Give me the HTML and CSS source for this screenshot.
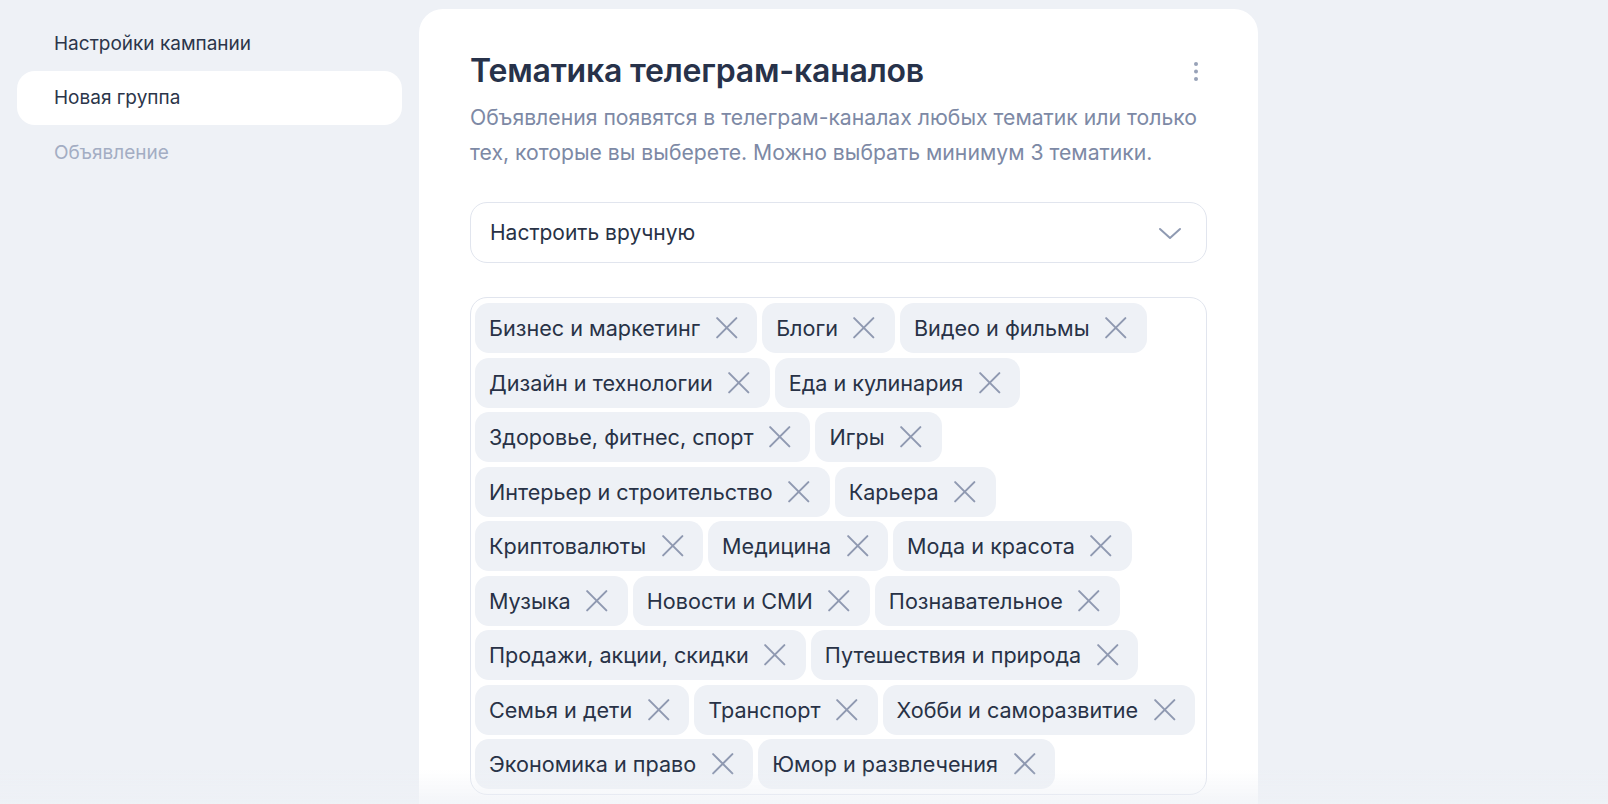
FILE: index.html
```html
<!DOCTYPE html>
<html lang="ru">
<head>
<meta charset="utf-8">
<title>Тематика телеграм-каналов</title>
<link rel="stylesheet" href="styles.css">
</head>
<body>
<div class="page">
  <nav class="sidebar">
    <div class="nav-item">Настройки кампании</div>
    <div class="nav-item active">Новая группа</div>
    <div class="nav-item muted">Объявление</div>
  </nav>
  <main class="card">
    <div class="card-head">
      <h1 class="title">Тематика телеграм-каналов</h1>
      <button class="kebab" aria-label="Ещё">
        <svg width="6" height="21" viewBox="0 0 6 21"><circle cx="3" cy="3" r="2"/><circle cx="3" cy="10.5" r="2"/><circle cx="3" cy="18" r="2"/></svg>
      </button>
    </div>
    <p class="desc">Объявления появятся в телеграм-каналах любых тематик или только тех, которые вы выберете. Можно выбрать минимум 3 тематики.</p>
    <div class="select">
      <span>Настроить вручную</span>
      <svg class="chev" width="26" height="26" viewBox="0 0 26 26"><path d="M3 9l10 9 10-9" fill="none" stroke-width="2" stroke-linecap="round" stroke-linejoin="round"/></svg>
    </div>
    <div class="tags">
      <span class="tag">Бизнес и маркетинг<svg class="x" viewBox="0 0 22 22"><path d="M2 2l18 18M20 2L2 20"/></svg></span>
      <span class="tag">Блоги<svg class="x" viewBox="0 0 22 22"><path d="M2 2l18 18M20 2L2 20"/></svg></span>
      <span class="tag">Видео и фильмы<svg class="x" viewBox="0 0 22 22"><path d="M2 2l18 18M20 2L2 20"/></svg></span>
      <span class="tag">Дизайн и технологии<svg class="x" viewBox="0 0 22 22"><path d="M2 2l18 18M20 2L2 20"/></svg></span>
      <span class="tag">Еда и кулинария<svg class="x" viewBox="0 0 22 22"><path d="M2 2l18 18M20 2L2 20"/></svg></span>
      <span class="tag">Здоровье, фитнес, спорт<svg class="x" viewBox="0 0 22 22"><path d="M2 2l18 18M20 2L2 20"/></svg></span>
      <span class="tag">Игры<svg class="x" viewBox="0 0 22 22"><path d="M2 2l18 18M20 2L2 20"/></svg></span>
      <span class="tag">Интерьер и строительство<svg class="x" viewBox="0 0 22 22"><path d="M2 2l18 18M20 2L2 20"/></svg></span>
      <span class="tag">Карьера<svg class="x" viewBox="0 0 22 22"><path d="M2 2l18 18M20 2L2 20"/></svg></span>
      <span class="tag">Криптовалюты<svg class="x" viewBox="0 0 22 22"><path d="M2 2l18 18M20 2L2 20"/></svg></span>
      <span class="tag">Медицина<svg class="x" viewBox="0 0 22 22"><path d="M2 2l18 18M20 2L2 20"/></svg></span>
      <span class="tag">Мода и красота<svg class="x" viewBox="0 0 22 22"><path d="M2 2l18 18M20 2L2 20"/></svg></span>
      <span class="tag">Музыка<svg class="x" viewBox="0 0 22 22"><path d="M2 2l18 18M20 2L2 20"/></svg></span>
      <span class="tag">Новости и СМИ<svg class="x" viewBox="0 0 22 22"><path d="M2 2l18 18M20 2L2 20"/></svg></span>
      <span class="tag">Познавательное<svg class="x" viewBox="0 0 22 22"><path d="M2 2l18 18M20 2L2 20"/></svg></span>
      <span class="tag">Продажи, акции, скидки<svg class="x" viewBox="0 0 22 22"><path d="M2 2l18 18M20 2L2 20"/></svg></span>
      <span class="tag">Путешествия и природа<svg class="x" viewBox="0 0 22 22"><path d="M2 2l18 18M20 2L2 20"/></svg></span>
      <span class="tag">Семья и дети<svg class="x" viewBox="0 0 22 22"><path d="M2 2l18 18M20 2L2 20"/></svg></span>
      <span class="tag">Транспорт<svg class="x" viewBox="0 0 22 22"><path d="M2 2l18 18M20 2L2 20"/></svg></span>
      <span class="tag">Хобби и саморазвитие<svg class="x" viewBox="0 0 22 22"><path d="M2 2l18 18M20 2L2 20"/></svg></span>
      <span class="tag">Экономика и право<svg class="x" viewBox="0 0 22 22"><path d="M2 2l18 18M20 2L2 20"/></svg></span>
      <span class="tag">Юмор и развлечения<svg class="x" viewBox="0 0 22 22"><path d="M2 2l18 18M20 2L2 20"/></svg></span>
    </div>
  </main>
</div>
<div class="fade"></div>
</body>
</html>
```

FILE: styles.css
```css
html, body {
  margin: 0;
  padding: 0;
  height: 100%;
  overflow: hidden;
}
body {
  background: #eef1f6;
  font-family: Inter, "Noto Sans", "Liberation Sans", sans-serif;
  color: #283246;
}
.page {
  display: flex;
  align-items: flex-start;
  padding: 9px 0 0 17px;
  gap: 17px;
}
.sidebar {
  width: 385px;
  display: flex;
  flex-direction: column;
  padding-top: 7px;
}
.nav-item {
  height: 54.5px;
  display: flex;
  align-items: center;
  padding-left: 37px;
  font-size: 19px;
  border-radius: 18px;
  color: #2b354a;
}
.nav-item.active {
  background: #ffffff;
}
.nav-item.muted {
  color: #a3adc3;
}
.card {
  width: 839px;
  min-height: 820px;
  box-sizing: border-box;
  background: #ffffff;
  border-radius: 24px;
  padding: 42px 51px 0 51px;
}
.card-head {
  display: flex;
  justify-content: space-between;
  align-items: center;
}
.title {
  margin: 0;
  font-size: 32px;
  font-weight: 600;
  line-height: 40px;
  color: #27324a;
  letter-spacing: -0.2px;
}
.kebab {
  border: 0;
  background: none;
  padding: 0;
  margin-right: 8px;
  display: flex;
  fill: #98a2b8;
}
.desc {
  margin: 8.5px 0 0 0;
  font-size: 21.2px;
  line-height: 35px;
  color: #7d89a5;
}
.select {
  margin-top: 32.5px;
  height: 61px;
  box-sizing: border-box;
  border: 1px solid #e1e5ee;
  border-radius: 17px;
  display: flex;
  align-items: center;
  justify-content: space-between;
  padding: 0 23px 0 19px;
  font-size: 21px;
  color: #283246;
}
.chev {
  stroke: #8f9ab2;
}
.tags {
  margin-top: 34px;
  border: 1px solid #e1e5ee;
  border-radius: 17px;
  padding: 5px 4px;
  display: flex;
  flex-wrap: wrap;
  gap: 4.5px 5px;
  height: 498px;
  box-sizing: border-box;
  align-content: flex-start;
}
.tag {
  height: 50px;
  box-sizing: border-box;
  display: inline-flex;
  align-items: center;
  background: #eef1f6;
  border-radius: 14px;
  padding: 0 19px 0 14px;
  font-size: 21.6px;
  color: #283246;
  gap: 14.5px;
}
.x {
  width: 23.5px;
  height: 23.5px;
  fill: none;
  stroke: #8f99b1;
  stroke-width: 1.9;
  stroke-linecap: round;
}
.fade {
  position: fixed;
  left: 0;
  right: 0;
  bottom: 0;
  height: 34px;
  background: linear-gradient(to bottom, rgba(238,241,246,0), rgba(238,241,246,0.7));
  pointer-events: none;
}
```
